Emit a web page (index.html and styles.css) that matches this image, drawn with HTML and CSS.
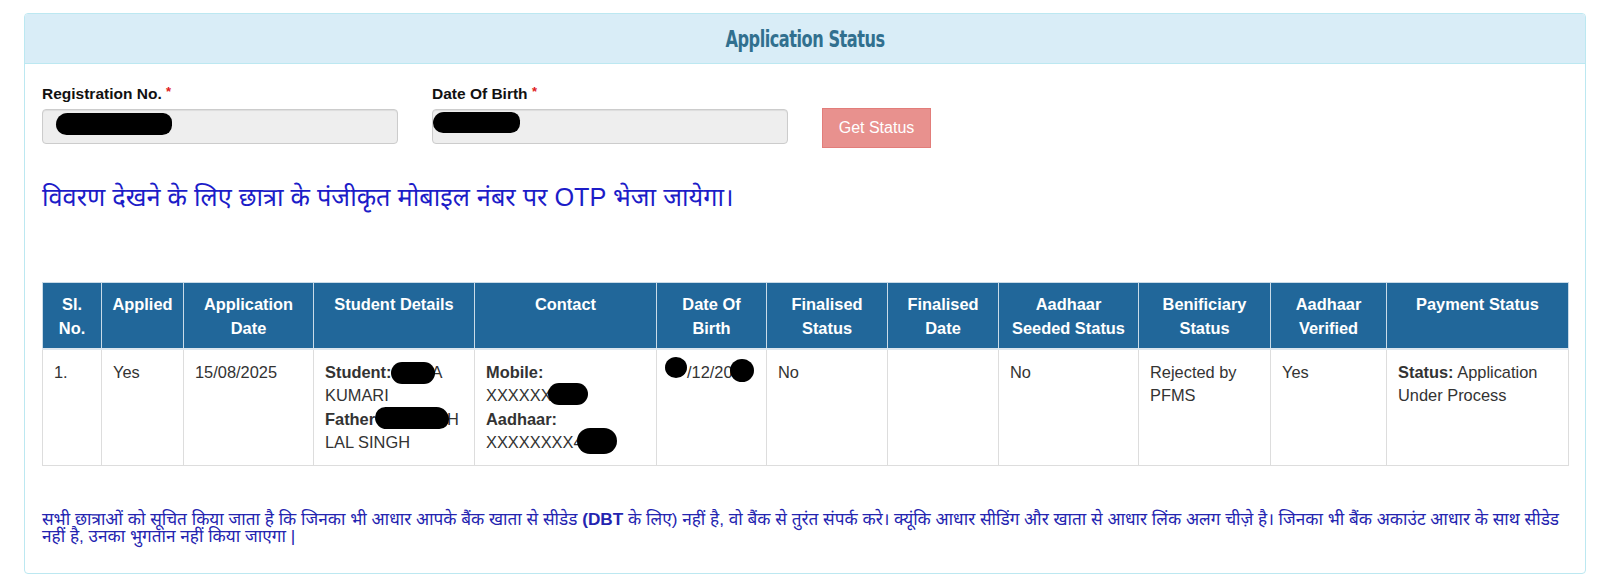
FILE: index.html
```html
<!DOCTYPE html>
<html lang="hi">
<head>
<meta charset="utf-8">
<title>Application Status</title>
<link rel="stylesheet" href="styles.css">
</head>
<body>
<div class="page">
  <div class="panel">
    <div class="panel-heading">
      <h3 class="panel-title">Application Status</h3>
    </div>
    <div class="panel-body">
      <div class="form-row">
        <div class="form-group">
          <label class="lbl">Registration No. <span class="req">*</span></label>
          <div class="field">
            <input class="form-control" type="text" disabled>
            <span class="redact redact-reg"></span>
          </div>
        </div>
        <div class="form-group">
          <label class="lbl">Date Of Birth <span class="req">*</span></label>
          <div class="field">
            <input class="form-control" type="text" disabled>
            <span class="redact redact-dob"></span>
          </div>
        </div>
        <div class="form-group btn-cell">
          <button class="btn-status" type="button" disabled>Get Status</button>
        </div>
      </div>

      <p class="otp-note">विवरण देखने के लिए छात्रा के पंजीकृत मोबाइल नंबर पर OTP भेजा जायेगा।</p>

      <table class="status-table">
        <colgroup>
          <col class="w-sl"><col class="w-applied"><col class="w-appdate"><col class="w-student"><col class="w-contact"><col class="w-dob"><col class="w-fstatus"><col class="w-fdate"><col class="w-seeded"><col class="w-benef"><col class="w-verified"><col class="w-payment">
        </colgroup>
        <thead>
          <tr>
            <th>Sl.<br>No.</th>
            <th>Applied</th>
            <th>Application Date</th>
            <th>Student Details</th>
            <th>Contact</th>
            <th>Date Of Birth</th>
            <th>Finalised Status</th>
            <th>Finalised Date</th>
            <th>Aadhaar Seeded Status</th>
            <th>Benificiary Status</th>
            <th>Aadhaar Verified</th>
            <th>Payment Status</th>
          </tr>
        </thead>
        <tbody>
          <tr>
            <td>1.</td>
            <td>Yes</td>
            <td>15/08/2025</td>
            <td><b>Student:</b><span class="blob blob-student"></span>A KUMARI<br><b>Father</b><span class="blob blob-father"></span>H LAL SINGH</td>
            <td><b>Mobile:</b><br>XXXXXX<span class="blob blob-mobile"></span><br><b>Aadhaar:</b><br>XXXXXXXX4<span class="blob blob-aadhaar"></span></td>
            <td class="nowrap"><span class="blob blob-dob1"></span>/12/20<span class="blob blob-dob2"></span></td>
            <td>No</td>
            <td></td>
            <td>No</td>
            <td>Rejected by PFMS</td>
            <td>Yes</td>
            <td><b>Status:</b> Application Under Process</td>
          </tr>
        </tbody>
      </table>

      <p class="notice">सभी छात्राओं को सूचित किया जाता है कि जिनका भी आधार आपके बैंक खाता से सीडेड <b>(DBT</b> के लिए) नहीं है, वो बैंक से तुरंत संपर्क करे। क्यूंकि आधार सीडिंग और खाता से आधार लिंक अलग चीज़े है। जिनका भी बैंक अकाउंट आधार के साथ सीडेड नहीं है, उनका भुगतान नहीं किया जाएगा |</p>
    </div>
  </div>
</div>
</body>
</html>
```

FILE: styles.css
```css
* { box-sizing: border-box; }

html, body {
  margin: 0;
  padding: 0;
  background: #fff;
}

body {
  font-family: "Liberation Sans", Arial, sans-serif;
  color: #333;
}

.page {
  padding: 13px 14px 7px 24px;
}

.panel {
  border: 1px solid #bce8f1;
  border-radius: 4px;
  background: #fff;
  height: 561px;
}

.panel-heading {
  background: #d9edf7;
  border-bottom: 1px solid #bce8f1;
  border-radius: 3px 3px 0 0;
  height: 50px;
  display: flex;
  align-items: center;
  justify-content: center;
}

.panel-title {
  display: inline-block;
  margin: 0;
  font-family: "DejaVu Sans Condensed", "Liberation Sans", sans-serif;
  font-weight: bold;
  font-size: 23px;
  letter-spacing: -0.6px;
  color: #31708f;
  transform: scaleX(0.78);
}

.panel-body {
  padding: 18px 17px 0 17px;
}

.form-row {
  display: grid;
  grid-template-columns: 356px 356px auto;
  column-gap: 34px;
  align-items: start;
}

.lbl {
  display: block;
  font-weight: bold;
  font-size: 15.5px;
  line-height: 20px;
  color: #111;
  margin-bottom: 5px;
}

.req {
  color: #e02020;
  font-size: 13px;
  vertical-align: 3px;
}

.field {
  position: relative;
}

.form-control {
  display: block;
  width: 100%;
  height: 35px;
  margin: 0;
  background: #eee;
  border: 1px solid #ccc;
  border-radius: 4px;
  box-shadow: inset 0 1px 1px rgba(0,0,0,.075);
}

.redact {
  position: absolute;
  background: #000;
  border-radius: 14px 11px 12px 13px;
}

.redact-reg {
  left: 14px;
  top: 4px;
  width: 116px;
  height: 22px;
}

.redact-dob {
  left: 1px;
  top: 3px;
  width: 87px;
  height: 21px;
}

.btn-cell {
  padding-top: 26px;
}

.btn-status {
  display: block;
  width: 109px;
  height: 40px;
  background: #e8918e;
  border: 1px solid #e27d7a;
  border-radius: 0;
  color: #fff;
  font-family: "Liberation Sans", Arial, sans-serif;
  font-size: 16px;
}

.otp-note {
  margin: 32px 0 0 0;
  font-size: 25.3px;
  line-height: 34px;
  color: #1c1cc8;
  font-family: "Liberation Sans", "Noto Sans Devanagari", sans-serif;
}

.status-table {
  margin-top: 68px;
  width: 1526px;
  table-layout: fixed;
  border-collapse: collapse;
  font-size: 16.4px;
}

.w-sl { width: 59px; }
.w-applied { width: 82px; }
.w-appdate { width: 130px; }
.w-student { width: 161px; }
.w-contact { width: 182px; }
.w-dob { width: 110px; }
.w-fstatus { width: 121px; }
.w-fdate { width: 111px; }
.w-seeded { width: 140px; }
.w-benef { width: 132px; }
.w-verified { width: 116px; }
.w-payment { width: 182px; }

.status-table th {
  background: #21679a;
  color: #fff;
  font-weight: bold;
  text-align: center;
  vertical-align: top;
  line-height: 24px;
  padding: 9px 8px 8px;
  border: 1px solid #c9dbe8;
  border-bottom: 2px solid #dde6ee;
}

.status-table td {
  vertical-align: top;
  line-height: 23.4px;
  padding: 11px 11px 10px;
  border: 1px solid #ddd;
  color: #333;
  height: 116px;
}

.status-table td.nowrap {
  white-space: nowrap;
}

/* redaction marks drawn over the hidden characters */
.blob {
  display: inline-block;
  position: relative;
  background: #000;
  border-radius: 12px;
  vertical-align: middle;
  margin-top: -12px;
  margin-bottom: -12px;
}

.blob-student { width: 44px; height: 22px; margin-right: -4px; top: -1px; }
.blob-father { width: 74px; height: 22px; margin-right: -2px; top: -2px; border-radius: 11px 13px 10px 12px; }
.blob-mobile { width: 40px; height: 22px; margin-left: -4px; top: -3px; border-radius: 11px; }
.blob-aadhaar { width: 40px; height: 26px; margin-left: -6px; top: -3px; border-radius: 13px; }
.blob-dob1 { width: 22px; height: 21px; border-radius: 50%; margin-left: -3px; top: -6px; }
.blob-dob2 { width: 24px; height: 23px; border-radius: 50%; margin-left: -3px; top: -3px; }

.notice {
  margin: 45px 0 0 0;
  font-size: 17.2px;
  line-height: 17px;
  color: #2424b0;
  font-family: "Liberation Sans", "Noto Sans Devanagari", sans-serif;
}
```
